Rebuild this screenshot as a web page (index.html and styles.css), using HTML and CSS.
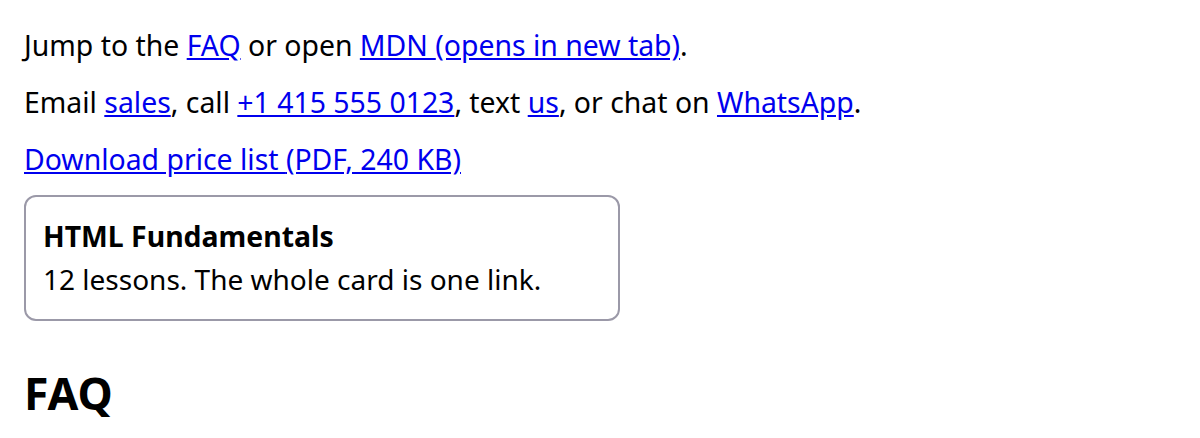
FILE: index.html
```html
<!DOCTYPE html>
<html lang="en">
<head>
<meta charset="utf-8">
<title>Links</title>
<link rel="stylesheet" href="styles.css">
</head>
<body>
<main class="page">
  <p class="line">Jump to the <a href="#faq">FAQ</a> or open <a href="#">MDN <span>(opens in new tab)</span></a>.</p>
  <p class="line">Email <a href="#">sales</a>, call <a href="#">+1 415 555 0123</a>, text <a href="#">us</a>, or chat on <a href="#">WhatsApp</a>.</p>
  <p class="line"><a href="#">Download price list <span>(PDF, 240 KB)</span></a></p>
  <a class="card" href="#">
    <span class="card-title">HTML Fundamentals</span>
    <span class="card-body">12 lessons. The whole card is one link.</span>
  </a>
  <h2 class="faq" id="faq">FAQ</h2>
</main>
</body>
</html>
```
FILE: styles.css
```css
html, body { margin: 0; padding: 0; background: #fff; }
body {
  font-family: "Noto Sans", "Open Sans", sans-serif;
  color: #000;
  font-size: 28.4px;
}
.page {
  padding: 26px 24px 0 24px;
  display: flex;
  flex-direction: column;
  align-items: flex-start;
}
.line {
  margin: 0 0 18px 0;
  line-height: 39px;
}
a { color: #0000ee; }
.card {
  margin-top: -2px;
  display: flex;
  flex-direction: column;
  width: 558px;
  padding: 19px 17px 17px 17px;
  border: 2px solid #9b99a8;
  border-radius: 12px;
  color: #000;
  text-decoration: none;
}
.card-title { font-weight: 700; line-height: 40px; }
.card-body { line-height: 46px; font-size: 28px; }
.faq {
  margin: 45px 0 0 0;
  font-size: 44.6px;
  font-weight: 700;
  line-height: 54px;
}
```
